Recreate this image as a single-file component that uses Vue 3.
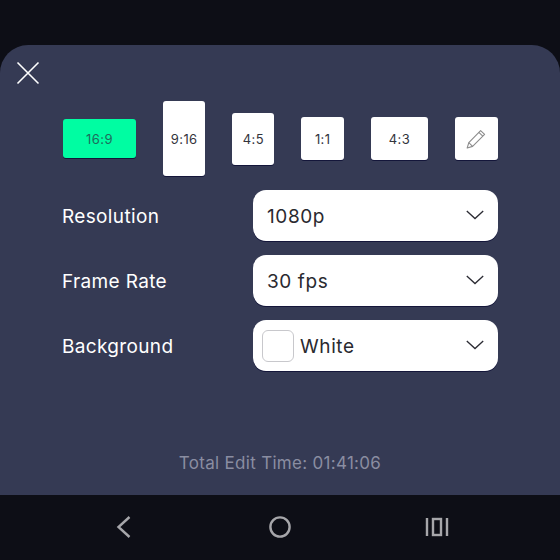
<script setup>
const ratios = [
  { label: '16:9', w: 73, h: 39, active: true },
  { label: '9:16', w: 42.4, h: 75 },
  { label: '4:5', w: 42, h: 52 },
  { label: '1:1', w: 42.5, h: 43 },
  { label: '4:3', w: 57, h: 43 },
]
const rows = [
  { label: 'Resolution', value: '1080p' },
  { label: 'Frame Rate', value: '30 fps' },
  { label: 'Background', value: 'White', swatch: true },
]
</script>

<template>
  <div class="screen">
    <div class="status"></div>
    <div class="sheet">
      <button class="close" aria-label="Close">
        <svg width="24" height="24" viewBox="0 0 24 24" fill="none" stroke="#fff" stroke-width="1.6">
          <path d="M1.5 1.5 L22.5 22.5 M22.5 1.5 L1.5 22.5" />
        </svg>
      </button>
      <div class="ratios">
        <div
          v-for="r in ratios"
          :key="r.label"
          class="ratio"
          :class="{ active: r.active }"
          :style="{ width: r.w + 'px', height: r.h + 'px' }"
        >{{ r.label }}</div>
        <div class="ratio pencil" :style="{ width: '43px', height: '43px' }">
          <svg width="20" height="20" viewBox="0 0 20 20" fill="none" stroke="#8c8c8c" stroke-width="1.1" stroke-linejoin="round">
            <path d="M1.2 19 L2.8 13.6 L14.6 1.6 L18.6 5.4 L6.6 17.4 Z" />
            <path d="M2.8 13.6 L6.6 17.4 M12.8 3.4 L16.8 7.2" />
          </svg>
        </div>
      </div>
      <div class="form">
        <div v-for="row in rows" :key="row.label" class="row">
          <span class="label">{{ row.label }}</span>
          <div class="select" :class="{ withSwatch: row.swatch }">
            <span v-if="row.swatch" class="swatch"></span>
            <span class="value">{{ row.value }}</span>
            <svg class="chev" width="18" height="10" viewBox="0 0 18 10" fill="none" stroke="#2b2b33" stroke-width="1.3">
              <path d="M0.8 1 L9 8.6 L17.2 1" />
            </svg>
          </div>
        </div>
      </div>
      <div class="total">Total Edit Time: 01:41:06</div>
    </div>
    <div class="nav">
      <svg width="16" height="22" viewBox="0 0 16 22" fill="none" stroke="#a6a6aa" stroke-width="2.4">
        <path d="M13.5 1 L2.5 11 L13.5 21" />
      </svg>
      <svg width="24" height="24" viewBox="0 0 24 24" fill="none" stroke="#a6a6aa" stroke-width="2.4">
        <circle cx="12" cy="12" r="9.6" />
      </svg>
      <svg width="24" height="20" viewBox="0 0 24 20" fill="none" stroke="#a6a6aa" stroke-width="2.4">
        <path d="M2 1 V19 M22 1 V19" />
        <rect x="8" y="2" width="8" height="16" />
      </svg>
    </div>
  </div>
</template>

<style>
html, body { margin: 0; background: #0d0e16; }
</style>

<style scoped>
.screen {
  width: 560px;
  height: 560px;
  display: flex;
  flex-direction: column;
  background: #0d0e16;
  font-family: "Inter", "Liberation Sans", sans-serif;
  overflow: hidden;
}
.status { height: 45px; flex: none; }
.sheet {
  height: 450px;
  flex: none;
  box-sizing: border-box;
  background: #353a54;
  border-radius: 28px 28px 0 0;
  display: flex;
  flex-direction: column;
  position: relative;
}
.close {
  position: absolute;
  left: 16px;
  top: 16px;
  width: 24px;
  height: 24px;
  padding: 0;
  border: 0;
  background: none;
  display: block;
}
.close svg { display: block; }
.ratios {
  display: flex;
  align-items: center;
  gap: 27px;
  margin: 56px 0 0 63px;
}
.ratio {
  flex: none;
  box-sizing: border-box;
  background: #fff;
  border-radius: 3px;
  box-shadow: 0 1px 0 #14163a;
  display: flex;
  align-items: center;
  justify-content: center;
  font-size: 13px;
  letter-spacing: 0.4px;
  color: #33343c;
}
.ratio.active { background: #00fda2; color: #1f6b5c; }
.form {
  margin: 14px 0 0 62px;
  display: flex;
  flex-direction: column;
  gap: 14px;
}
.row {
  display: flex;
  align-items: center;
}
.label {
  width: 191px;
  flex: none;
  color: #fff;
  font-size: 19px;
  font-weight: 400;
  letter-spacing: 0.35px;
  padding-top: 2px;
}
.select {
  width: 245px;
  height: 51px;
  box-sizing: border-box;
  background: #fff;
  border-radius: 13px;
  box-shadow: 0 1px 0 #14163a;
  display: flex;
  align-items: center;
  padding: 0 14px;
}
.select.withSwatch { padding-left: 9px; }
.swatch {
  width: 32px;
  height: 32px;
  box-sizing: border-box;
  border: 1.5px solid #c8c8cc;
  border-radius: 6px;
  margin-right: 6px;
  flex: none;
}
.value {
  flex: 1;
  font-size: 19px;
  color: #2a2a30;
  letter-spacing: 0.6px;
  padding-top: 2px;
}
.chev { flex: none; margin-bottom: 2px; }
.total {
  position: absolute;
  left: 0;
  right: 0;
  top: 408px;
  text-align: center;
  font-size: 17px;
  letter-spacing: 0.3px;
  color: #8a8da1;
}
.nav {
  flex: 1;
  display: grid;
  grid-template-columns: repeat(3, 156.5px);
  justify-content: center;
  justify-items: center;
  align-items: center;
  padding-bottom: 2px;
  box-sizing: border-box;
}
</style>
